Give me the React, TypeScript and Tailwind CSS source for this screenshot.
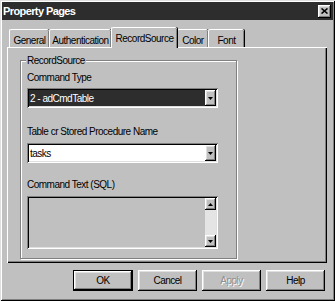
import React from "react";

const raised =
  "shadow-[inset_-1px_-1px_0_#000,inset_1px_1px_0_#fff,inset_-2px_-2px_0_#808080,inset_2px_2px_0_#dfdfdf]";
const sunken =
  "shadow-[inset_1px_1px_0_#808080,inset_-1px_-1px_0_#fff,inset_2px_2px_0_#000,inset_-2px_-2px_0_#dfdfdf]";

function Arrow({ up = false }: { up?: boolean }) {
  return (
    <svg width="5" height="3" viewBox="0 0 5 3" className="block">
      {up ? <polygon points="2.5,0 5,3 0,3" fill="#000" /> : <polygon points="0,0 5,0 2.5,3" fill="#000" />}
    </svg>
  );
}

function DropBtn() {
  return (
    <div className={`w-[11px] h-[16px] bg-[#c0c0c0] ${raised} flex items-center justify-center`}>
      <Arrow />
    </div>
  );
}

function Tab({ label, w, selected = false }: { label: string; w: string; selected?: boolean }) {
  if (selected) {
    return (
      <div
        className={`${w} h-[21px] -mb-px relative z-10 bg-[#c0c0c0] border-t border-l border-white rounded-tl-[2px] rounded-tr-[2px] shadow-[inset_-1px_0_0_#808080,1px_0_0_#000] flex justify-center pt-[4px]`}
      >
        <span>{label}</span>
      </div>
    );
  }
  return (
    <div
      className={`${w} h-[18px] bg-[#c0c0c0] border-t border-l border-white rounded-tl-[2px] rounded-tr-[2px] shadow-[inset_-1px_0_0_#808080,1px_0_0_#000] flex justify-center pt-[4px]`}
    >
      <span>{label}</span>
    </div>
  );
}

function Btn({ label, def = false, disabled = false }: { label: string; def?: boolean; disabled?: boolean }) {
  return (
    <div
      className={`h-[21px] ${def ? "w-[60px] border border-black" : "w-[59px]"} bg-[#c0c0c0] ${raised} flex items-center justify-center ${
        disabled ? "text-[#909090] [text-shadow:1px_1px_0_#fff]" : "text-black"
      }`}
    >
      {label}
    </div>
  );
}

export default function App() {
  return (
    <div
      className={`w-[335px] h-[301px] bg-[#c0c0c0] p-[2px] shadow-[inset_1px_1px_0_#dfdfdf,inset_-1px_-1px_0_#000,inset_2px_2px_0_#fff,inset_-2px_-2px_0_#808080] font-['Liberation_Sans',Arial,sans-serif] text-[10px] leading-[13px] text-black tracking-[-0.5px] flex flex-col`}
    >
      {/* Title bar */}
      <div className="h-[18px] bg-[#2d2d2d] flex items-center justify-between pl-[1px] pr-[2px]">
        <span className="text-white font-bold text-[11px] tracking-[-0.6px]">Property Pages</span>
        <div className={`w-[13px] h-[13px] bg-[#c0c0c0] ${raised} flex items-center justify-center`}>
          <svg width="7" height="6" viewBox="0 0 7 6">
            <path d="M0.5 0.5 L6.5 5.5 M6.5 0.5 L0.5 5.5" stroke="#000" strokeWidth="1.6" />
          </svg>
        </div>
      </div>

      {/* Tabs */}
      <div className="mt-[7px] ml-[5px] h-[20px] flex items-end pl-[2px]">
        <Tab label="General" w="w-[40px]" />
        <Tab label="Authentication" w="w-[62px]" />
        <Tab label="RecordSource" w="w-[66px]" selected />
        <Tab label="Color" w="w-[31px]" />
        <Tab label="Font" w="w-[36px]" />
      </div>

      {/* Panel */}
      <div
        className={`ml-[5px] w-[320px] h-[216px] bg-[#c0c0c0] shadow-[inset_1px_1px_0_#fff,inset_-1px_-1px_0_#000,inset_-2px_-2px_0_#808080] pl-[13px] pt-[13px] pb-[4px]`}
      >
        {/* Group box */}
        <div className="relative w-[217px] h-[199px] border border-[#808080] shadow-[inset_1px_1px_0_#fff,1px_1px_0_#fff] pl-[6px] pt-[10px]">
          <span className="absolute left-[5px] -top-[7px] bg-[#c0c0c0] px-[1px]">RecordSource</span>

          <div className="h-[13px]">Command Type</div>
          <div className={`mt-[4px] w-[191px] h-[20px] bg-[#2d2d2d] ${sunken} flex items-center justify-between pl-[3px] pr-[2px]`}>
            <span className="text-white">2 - adCmdTable</span>
            <DropBtn />
          </div>

          <div className="mt-[17px] h-[13px]">Table cr Stored Procedure Name</div>
          <div className={`mt-[5px] w-[191px] h-[20px] bg-white ${sunken} flex items-center justify-between pl-[3px] pr-[2px]`}>
            <span>tasks</span>
            <DropBtn />
          </div>

          <div className="mt-[15px] h-[13px]">Command Text (SQL)</div>
          <div className={`mt-[5px] w-[191px] h-[53px] bg-[#c0c0c0] ${sunken} flex justify-end p-[2px]`}>
            <div className="w-[11px] h-full flex flex-col bg-[#e4e4e4]">
              <div className={`h-[12px] bg-[#c0c0c0] ${raised} flex items-center justify-center`}>
                <Arrow up />
              </div>
              <div className="flex-1" />
              <div className={`h-[12px] bg-[#c0c0c0] ${raised} flex items-center justify-center`}>
                <Arrow />
              </div>
            </div>
          </div>
        </div>
      </div>

      {/* Buttons */}
      <div className="mt-[7px] ml-[71px] flex gap-[5px]">
        <Btn label="OK" def />
        <Btn label="Cancel" />
        <Btn label="Apply" disabled />
        <Btn label="Help" />
      </div>
    </div>
  );
}
